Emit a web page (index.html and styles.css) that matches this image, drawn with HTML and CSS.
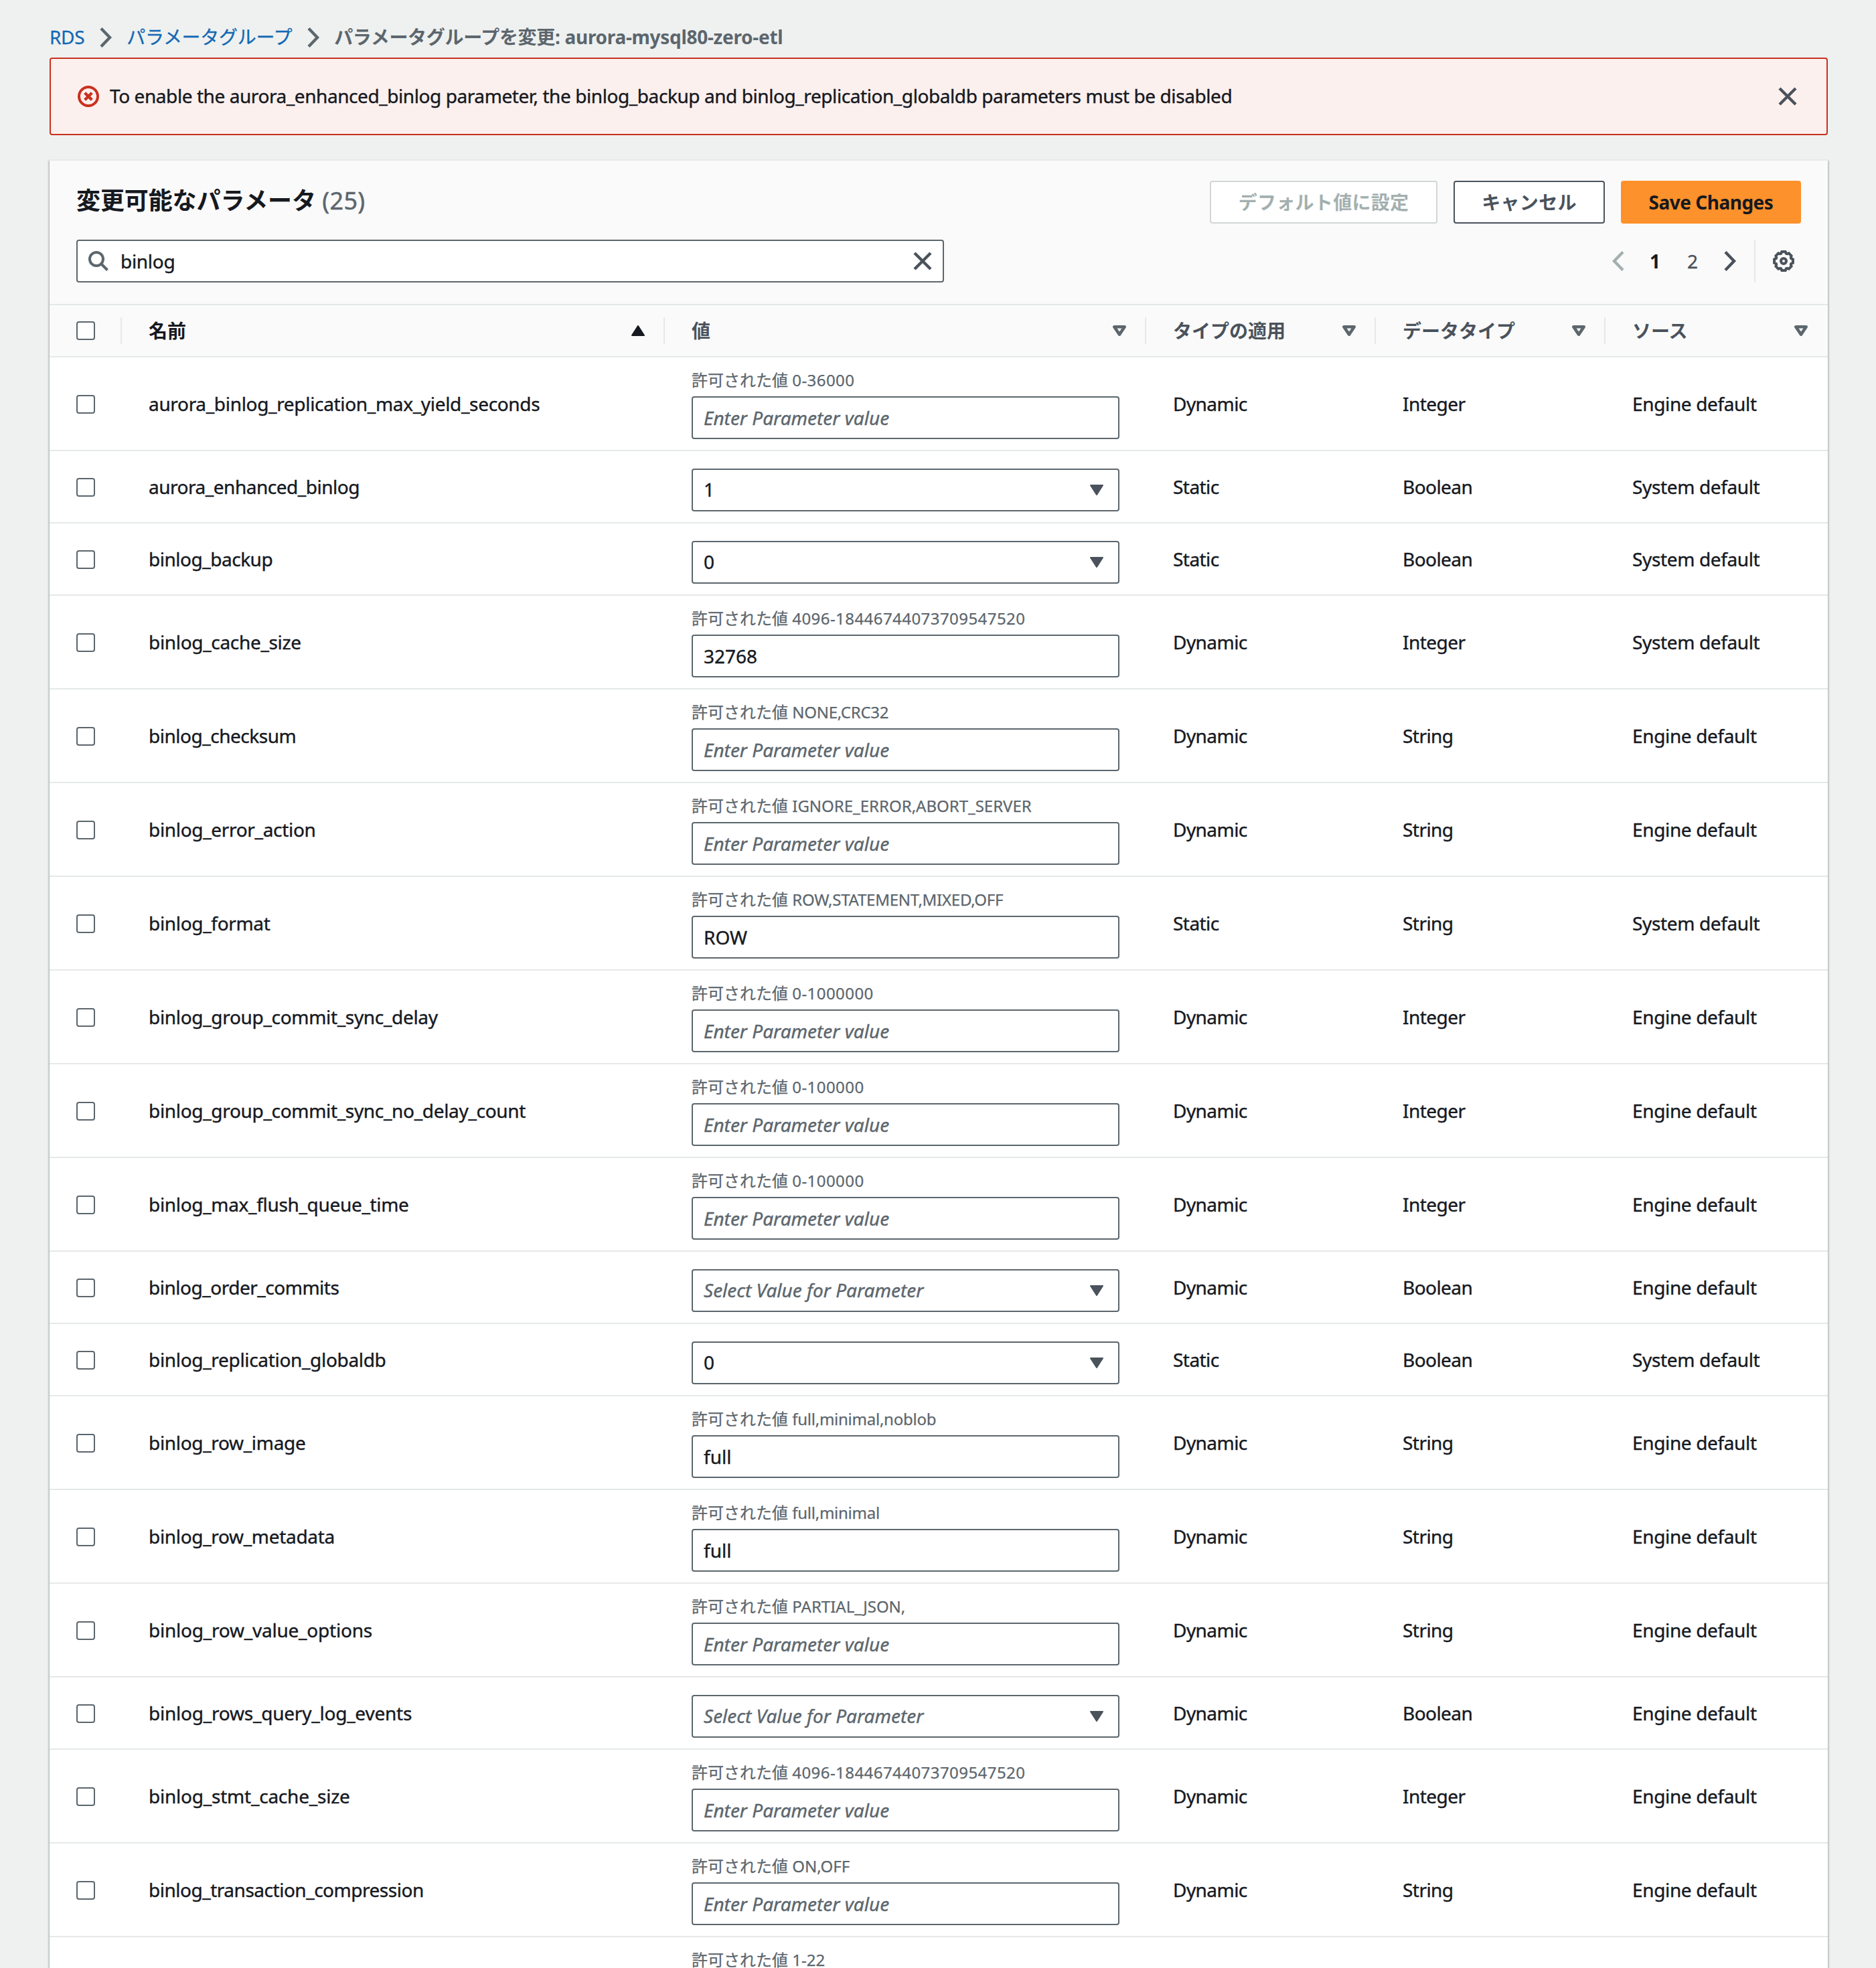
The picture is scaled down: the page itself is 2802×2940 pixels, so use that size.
FILE: index.html
```html
<!DOCTYPE html>
<html lang="ja">
<head>
<meta charset="utf-8">
<title>RDS</title>
<link rel="stylesheet" href="styles.css">
</head>
<body>
<svg width="0" height="0" class="defs">
  <symbol id="chev" viewBox="0 0 20 32"><path d="M3 2.500L16 16 3 29.500" fill="none" stroke="currentColor" stroke-width="4.400"/></symbol>
  <symbol id="close" viewBox="0 0 32 32"><path d="M4 4l24 24M28 4L4 28" fill="none" stroke="currentColor" stroke-width="4.400"/></symbol>
  <symbol id="sort" viewBox="0 0 20 16"><path d="M2.300 2.300h15.400L10 13.600z" fill="none" stroke="currentColor" stroke-width="4.600" stroke-linejoin="round"/></symbol>
  <symbol id="caret" viewBox="0 0 20 16"><path d="M1 1h18l-9 14z" fill="currentColor" stroke="currentColor" stroke-width="2" stroke-linejoin="round"/></symbol>
</svg>
<nav class="crumbs">
  <a class="rds">RDS</a><svg class="chev"><use href="#chev"/></svg><a>パラメータグループ</a><svg class="chev"><use href="#chev"/></svg><b>パラメータグループを変更: aurora-mysql80-zero-etl</b>
</nav>
<div class="alert">
  <svg class="err" viewBox="0 0 32 32"><circle cx="16" cy="16" r="14" fill="none" stroke="currentColor" stroke-width="4"/><path d="M10.700 10.700l10.600 10.600M21.300 10.700L10.700 21.300" stroke="currentColor" stroke-width="4.400"/></svg>
  <span class="msg">To enable the aurora_enhanced_binlog parameter, the binlog_backup and binlog_replication_globaldb parameters must be disabled</span>
  <svg class="x"><use href="#close"/></svg>
</div>
<section class="panel">
  <header class="head">
    <div class="line">
      <h1>変更可能なパラメータ <span>(25)</span></h1>
      <div class="btns"><button class="btn off">デフォルト値に設定</button><button class="btn cancel">キャンセル</button><button class="btn save">Save Changes</button></div>
    </div>
    <div class="line">
      <div class="search">
        <svg class="mag" viewBox="0 0 32 32"><circle cx="13" cy="13" r="10" fill="none" stroke="currentColor" stroke-width="4"/><path d="M20 20l9.500 9.500" stroke="currentColor" stroke-width="4"/></svg>
        <span class="q">binlog</span>
        <svg class="x"><use href="#close"/></svg>
      </div>
      <div class="pager">
        <svg class="chev prev"><use href="#chev"/></svg><b>1</b><span>2</span><svg class="chev next"><use href="#chev"/></svg>
        <i class="bar"></i>
        <svg class="gear" viewBox="-16 -16 32 32"><path d="M13.900 2.700L11.200 3.900 10.800 5.300 11.600 7.800 7.800 11.600 5.300 10.800 3.900 11.200 2.700 13.900H-2.700L-3.900 11.200-5.300 10.800-7.800 11.600-11.600 7.800-10.800 5.300-11.200 3.900-13.900 2.700V-2.700L-11.200-3.900-10.800-5.300-11.600-7.800-7.800-11.600-5.300-10.800-3.900-11.200-2.700-13.900H2.700L3.900-11.200 5.300-10.800 7.800-11.600 11.600-7.800 10.800-5.300 11.200-3.900 13.900-2.700z" fill="none" stroke="currentColor" stroke-width="4"/><circle r="4" fill="none" stroke="currentColor" stroke-width="4"/></svg>
      </div>
    </div>
  </header>
  <div class="grid th">
    <div class="c"><i class="box"></i></div>
    <div class="c on">名前<svg class="tri up"><use href="#caret"/></svg></div>
    <div class="c">値<svg class="tri"><use href="#sort"/></svg></div>
    <div class="c">タイプの適用<svg class="tri"><use href="#sort"/></svg></div>
    <div class="c">データタイプ<svg class="tri"><use href="#sort"/></svg></div>
    <div class="c">ソース<svg class="tri"><use href="#sort"/></svg></div>
  </div>
  <div class="grid tr"><i class="box"></i><span>aurora_binlog_replication_max_yield_seconds</span><div class="v"><small>許可された値 <em class="num">0-36000</em></small><div class="in ph">Enter Parameter value</div></div><span>Dynamic</span><span>Integer</span><span>Engine default</span></div>
  <div class="grid tr s"><i class="box"></i><span class="tight">aurora_enhanced_binlog</span><div class="v"><div class="in sel">1<svg class="tri"><use href="#caret"/></svg></div></div><span>Static</span><span>Boolean</span><span>System default</span></div>
  <div class="grid tr s"><i class="box"></i><span class="tight">binlog_backup</span><div class="v"><div class="in sel">0<svg class="tri"><use href="#caret"/></svg></div></div><span>Static</span><span>Boolean</span><span>System default</span></div>
  <div class="grid tr"><i class="box"></i><span>binlog_cache_size</span><div class="v"><small>許可された値 <em class="num">4096-18446744073709547520</em></small><div class="in">32768</div></div><span>Dynamic</span><span>Integer</span><span>System default</span></div>
  <div class="grid tr"><i class="box"></i><span class="tight">binlog_checksum</span><div class="v"><small>許可された値 <em>NONE,CRC32</em></small><div class="in ph">Enter Parameter value</div></div><span>Dynamic</span><span>String</span><span>Engine default</span></div>
  <div class="grid tr"><i class="box"></i><span>binlog_error_action</span><div class="v"><small>許可された値 IGNORE_ERROR,ABORT_SERVER</small><div class="in ph">Enter Parameter value</div></div><span>Dynamic</span><span>String</span><span>Engine default</span></div>
  <div class="grid tr"><i class="box"></i><span>binlog_format</span><div class="v"><small>許可された値 <em>ROW,STATEMENT,MIXED,OFF</em></small><div class="in">ROW</div></div><span>Static</span><span>String</span><span>System default</span></div>
  <div class="grid tr"><i class="box"></i><span>binlog_group_commit_sync_delay</span><div class="v"><small>許可された値 <em class="num">0-1000000</em></small><div class="in ph">Enter Parameter value</div></div><span>Dynamic</span><span>Integer</span><span>Engine default</span></div>
  <div class="grid tr"><i class="box"></i><span>binlog_group_commit_sync_no_delay_count</span><div class="v"><small>許可された値 <em class="num">0-100000</em></small><div class="in ph">Enter Parameter value</div></div><span>Dynamic</span><span>Integer</span><span>Engine default</span></div>
  <div class="grid tr"><i class="box"></i><span>binlog_max_flush_queue_time</span><div class="v"><small>許可された値 <em class="num">0-100000</em></small><div class="in ph">Enter Parameter value</div></div><span>Dynamic</span><span>Integer</span><span>Engine default</span></div>
  <div class="grid tr s"><i class="box"></i><span class="tight">binlog_order_commits</span><div class="v"><div class="in sel ph">Select Value for Parameter<svg class="tri"><use href="#caret"/></svg></div></div><span>Dynamic</span><span>Boolean</span><span>Engine default</span></div>
  <div class="grid tr s"><i class="box"></i><span>binlog_replication_globaldb</span><div class="v"><div class="in sel">0<svg class="tri"><use href="#caret"/></svg></div></div><span>Static</span><span>Boolean</span><span>System default</span></div>
  <div class="grid tr"><i class="box"></i><span>binlog_row_image</span><div class="v"><small>許可された値 <em>full,minimal,noblob</em></small><div class="in">full</div></div><span>Dynamic</span><span>String</span><span>Engine default</span></div>
  <div class="grid tr"><i class="box"></i><span>binlog_row_metadata</span><div class="v"><small>許可された値 <em>full,minimal</em></small><div class="in">full</div></div><span>Dynamic</span><span>String</span><span>Engine default</span></div>
  <div class="grid tr"><i class="box"></i><span class="loose">binlog_row_value_options</span><div class="v"><small>許可された値 PARTIAL_JSON,</small><div class="in ph">Enter Parameter value</div></div><span>Dynamic</span><span>String</span><span>Engine default</span></div>
  <div class="grid tr s"><i class="box"></i><span class="loose">binlog_rows_query_log_events</span><div class="v"><div class="in sel ph">Select Value for Parameter<svg class="tri"><use href="#caret"/></svg></div></div><span>Dynamic</span><span>Boolean</span><span>Engine default</span></div>
  <div class="grid tr"><i class="box"></i><span class="loose">binlog_stmt_cache_size</span><div class="v"><small>許可された値 <em class="num">4096-18446744073709547520</em></small><div class="in ph">Enter Parameter value</div></div><span>Dynamic</span><span>Integer</span><span>Engine default</span></div>
  <div class="grid tr"><i class="box"></i><span class="tight">binlog_transaction_compression</span><div class="v"><small>許可された値 ON,OFF</small><div class="in ph">Enter Parameter value</div></div><span>Dynamic</span><span>String</span><span>Engine default</span></div>
  <div class="grid tr last"><i></i><i></i><div class="v"><small>許可された値 1-22</small></div></div>
</section>
</body>
</html>
```
FILE: styles.css
```css
* { box-sizing: border-box; }
html { height: 2940px; overflow: hidden; }
body {
  margin: 0; width: 2802px; height: 2940px; overflow: hidden;
  padding: 0 72px 0 74px; background: #eff1f0; color: #16191f;
  font: 28px/44px "Noto Sans", "Noto Sans CJK JP", sans-serif;
}
svg { display: block; flex: none; }
.defs { position: absolute; }
.crumbs { height: 86px; display: flex; align-items: flex-start; padding-top: 33px; color: #5c666d; white-space: nowrap; }
.crumbs a { color: #1268b3; letter-spacing: -.3px; -webkit-text-stroke: .3px; }
.crumbs b { letter-spacing: -.3px; }
.chev { width: 20px; height: 32px; color: #5c666d; }
.crumbs .chev { margin: 7px 21px 0 22px; }
.alert {
  height: 116px; border: 2px solid #c9311f; border-radius: 4px; background: #fcf0ee;
  display: flex; align-items: center; padding: 0 42px 0 40px;
}
.err { width: 32px; height: 32px; color: #c9311f; margin-right: 16px; }
.x { width: 32px; height: 32px; color: #4a525b; }
.msg { flex: 1; white-space: nowrap; letter-spacing: -.425px; padding-bottom: 2px; -webkit-text-stroke: .4px; }
.panel {
  margin-top: 36px; background: #fff; border-top: 2px solid #e7eae9; height: 2760px;
  box-shadow: 0 2px 2px 0 rgba(0, 28, 36, .3), 2px 2px 2px 0 rgba(0, 28, 36, .15), -2px 2px 2px 0 rgba(0, 28, 36, .15);
}
.head { background: #fafafa; height: 216px; border-bottom: 2px solid #e5e9e8; padding: 30px 40px 0; }
.line { display: flex; justify-content: space-between; height: 64px; margin-bottom: 24px; align-items: center; }
h1 { margin: 0 0 5px; font-size: 36px; line-height: 44px; font-weight: 700; letter-spacing: -.1px; }
h1 span { font-weight: 400; color: #5c666d; letter-spacing: .4px; -webkit-text-stroke: .5px; }
.btns { display: flex; gap: 24px; }
.btn {
  height: 64px; border: 2px solid #4a525b; border-radius: 4px; background: #fff; color: #4a525b;
  font: 700 28px/44px "Noto Sans", "Noto Sans CJK JP", sans-serif; padding: 0; white-space: nowrap; letter-spacing: .3px;
}
.off { width: 340px; border-color: #d2d7d6; color: #a3b0af; }
.cancel { width: 226px; }
.save { width: 269px; background: #fd912b; border-color: #fd912b; color: #16191f; letter-spacing: -.5px; }
.search { width: 1296px; height: 64px; border: 2px solid #5c666d; border-radius: 4px; background: #fff; display: flex; align-items: center; padding: 0 14px 0 15px; }
.mag { width: 32px; height: 32px; color: #5c666d; margin-right: 17px; }
.q { flex: 1; letter-spacing: -.3px; -webkit-text-stroke: .4px; }
.pager { display: flex; align-items: center; height: 64px; color: #4a525b; }
.pager b { color: #16191f; margin-left: 37px; width: 56px; }
.pager span { width: 54px; -webkit-text-stroke: .4px; }
.prev { transform: scaleX(-1); color: #a3b0af; }
.next { color: #4a525b; }
.bar { width: 2px; height: 64px; background: #e5e9e8; margin: 0 26px; }
.gear { width: 32px; height: 32px; color: #4a525b; margin-right: 10px; }
.grid { display: grid; grid-template-columns: 108px 811px 719px 343px 343px 332px; align-items: center; }
.th { height: 78px; background: #fafafa; border-bottom: 2px solid #e5e9e8; font-weight: 700; color: #4a525b; }
.th .c { height: 40px; display: flex; align-items: center; justify-content: space-between; padding: 0 28px 0 40px; border-right: 2px solid #e5e9e8; }
.th .c:last-child { border-right: 0; padding-right: 30px; }
.th .on { color: #16191f; }
.tri { width: 20px; height: 16px; color: #5c666d; }
.up { transform: scaleY(-1); color: #16191f; }
.box { display: block; width: 28px; height: 28px; border: 2px solid #5c666d; border-radius: 4px; background: #fff; flex: none; }
.tr { height: 140px; box-shadow: inset 0 -2px #e5e9e8; }
.tr.s { height: 108px; }
.tr > .box, .tr > span { margin-left: 40px; }
.tr > span { white-space: nowrap; letter-spacing: -.55px; padding-bottom: 2px; -webkit-text-stroke: .4px; }
.tr > span:nth-child(2) { letter-spacing: -.32px; }
.tr > span:last-child { letter-spacing: -.36px; }
.tr > .tight:nth-child(2) { letter-spacing: -.48px; }
.tr > .loose:nth-child(2) { letter-spacing: -.22px; }
.v { margin-left: 40px; height: 100%; padding-top: 18px; }
.v small { display: block; font-size: 24px; line-height: 32px; height: 40px; color: #5c666d; white-space: nowrap; -webkit-text-stroke: .25px; }
.v em { font-style: normal; letter-spacing: -.25px; }
.v .num { letter-spacing: .44px; }
.s .v { padding-top: 26px; }
.in { width: 639px; height: 64px; border: 2px solid #5c666d; border-radius: 4px; background: #fff; display: flex; align-items: center; justify-content: space-between; padding: 0 22px 0 16px; white-space: nowrap; -webkit-text-stroke: .4px; }
.in .tri { color: #4a525b; }
.ph { color: #5c666d; font-style: italic; }
.sel { line-height: 42px; padding-bottom: 2px; }
.sel .tri { margin-top: 2px; }
```
